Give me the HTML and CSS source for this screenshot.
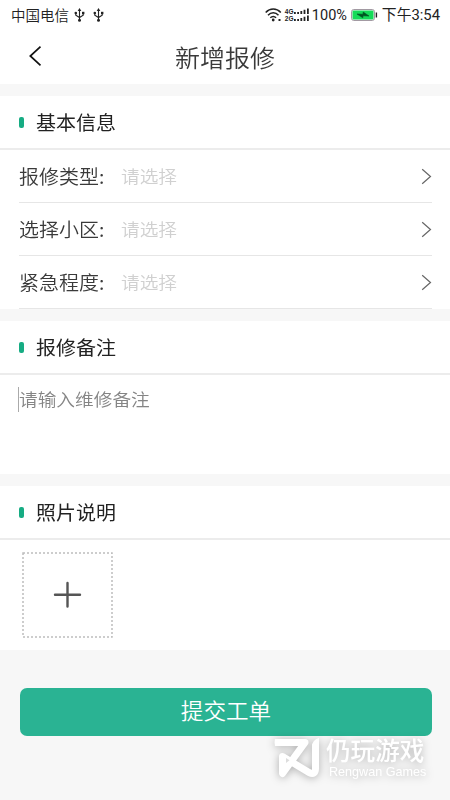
FILE: index.html
```html
<!DOCTYPE html>
<html lang="zh-CN">
<head>
<meta charset="utf-8">
<title>新增报修</title>
<link rel="stylesheet" href="styles.css">
</head>
<body>
<div class="status">
  <span class="carrier">中国电信</span>
  <svg class="usb" width="11" height="14" viewBox="0 0 11 14"><path d="M5.5 2v10M1.8 5v2.2l3.7 2.3 3.7-2.3V5" fill="none" stroke="#222" stroke-width="1.1"/><path d="M5.5 0l1.8 3H3.7z"/><circle cx="1.8" cy="5" r="1.3"/><path d="M8 3.8h2.4v2.4H8z"/><circle cx="5.5" cy="12.2" r="1.5"/></svg>
  <svg class="usb" width="11" height="14" viewBox="0 0 11 14"><path d="M5.5 2v10M1.8 5v2.2l3.7 2.3 3.7-2.3V5" fill="none" stroke="#222" stroke-width="1.1"/><path d="M5.5 0l1.8 3H3.7z"/><circle cx="1.8" cy="5" r="1.3"/><path d="M8 3.8h2.4v2.4H8z"/><circle cx="5.5" cy="12.2" r="1.5"/></svg>
  <svg class="wifi" width="17" height="14" viewBox="0 0 17 14"><g fill="none" stroke="#222" stroke-width="1.5"><path d="M.7 4.5C5-.1 11.5-.1 15.8 4.5M3 7.2c3-3.2 7.500-3.2 10.5 0M5.3 9.8c1.8-1.9 4-1.9 5.8 0"/></g><circle cx="8.2" cy="12" r="1.4"/><path d="M13.500 11h2v2h-2z"/></svg>
  <span class="nets"><b>4G</b><b>2G</b></span>
  <svg class="bars" width="16" height="14" viewBox="0 0 16 14"><path d="M0 4h1.8v2H0zM3.2 4H5v2H3.2zM6.4 3h1.8v3H6.4zM9.6 1.8h1.8V6H9.6zM13 .5h1.8V6H13zM0 11h1.8v2H0zM3.2 11H5v2H3.2zM6.4 10h1.8v3H6.4zM9.6 8.8h1.8V13H9.6zM13 7.5h1.8V13H13z"/></svg>
  <span class="percent">100%</span>
  <svg class="battery" width="27" height="12" viewBox="0 0 27 12"><rect x=".6" y=".6" width="22.8" height="10.8" rx="2" fill="#fff" stroke="#998f99"/><rect x="1.500" y="1.500" width="21" height="9" rx="1" fill="#14db58"/><path d="M6 5l6 .2.2-2.2 5.8 4-6-.2-.2 2z" fill="#052" stroke="#052" stroke-width=".6"/><path d="M24.7 3.5h1.4v5h-1.4z"/></svg>
  <span class="time">下午3:54</span>
</div>
<header class="nav">
  <svg class="back" width="14" height="22" viewBox="0 0 14 22"><path d="M12.5 1.7L2.3 11l10.2 9.3" fill="none" stroke="#111" stroke-width="1.7"/></svg>
  <h1>新增报修</h1>
</header>
<section class="card basic">
  <h2><span>基本信息</span></h2>
  <div class="row"><label>报修类型:</label><span>请选择</span><svg width="11" height="17" viewBox="0 0 11 17"><path d="M1.2 1.2l8.3 7.3-8.3 7.3" fill="none" stroke="#666" stroke-width="1.2"/></svg></div>
  <div class="row"><label>选择小区:</label><span>请选择</span><svg width="11" height="17" viewBox="0 0 11 17"><path d="M1.2 1.2l8.3 7.3-8.3 7.3" fill="none" stroke="#666" stroke-width="1.2"/></svg></div>
  <div class="row"><label>紧急程度:</label><span>请选择</span><svg width="11" height="17" viewBox="0 0 11 17"><path d="M1.2 1.2l8.3 7.3-8.3 7.3" fill="none" stroke="#666" stroke-width="1.2"/></svg></div>
</section>
<section class="card remark">
  <h2><span>报修备注</span></h2>
  <div class="note"><i class="caret"></i><span>请输入维修备注</span></div>
</section>
<section class="card photos">
  <h2><span>照片说明</span></h2>
  <div class="upload">
    <svg width="91" height="86" viewBox="0 0 91 86"><rect x="1" y="1" width="89" height="84" fill="none" stroke="#bdbdbd" stroke-width="1.5" stroke-dasharray="2 2"/><path d="M45.5 31v23.500M33 42.700h25" stroke="#555" stroke-width="2.400" stroke-linecap="round"/></svg>
  </div>
</section>
<button class="submit"><span>提交工单</span></button>
<div class="watermark">
  <svg width="48" height="42" viewBox="0 0 48 42"><g fill="none" stroke="#fff" stroke-width="7" stroke-linejoin="round" stroke-linecap="round"><path d="M8 6.500h23L8.500 37.500V20.500L35 36.500q6.500 3 6.500-4V10"/></g><path d="M1 3h8v7H1q-1-4 0-7zM38 11q0-7 7-9v10h-7z" fill="#fff"/><path d="M12 22l3.500 2.300L12 27z" fill="#ddd"/></svg>
  <div class="brand"><strong>仍玩游戏</strong><small>Rengwan Games</small></div>
</div>
</body>
</html>
```
FILE: styles.css
```css
* { box-sizing: border-box; }
body {
  margin: 0;
  width: 450px;
  height: 800px;
  overflow: hidden;
  position: relative;
  background: #f7f7f7;
  font-family: "Noto Sans CJK SC", sans-serif;
  font-weight: 350;
  color: #3a3a3a;
}
.status {
  display: flex;
  align-items: center;
  height: 30px;
  padding: 0 10px 0 11px;
  background: #fff;
  font-size: 14.5px;
  line-height: 28px;
  color: #222;
  white-space: nowrap;
}
.status svg { fill: #222; flex: none; }
.carrier { margin-top: -1px; }
.usb { margin-left: 5px; }
.usb + .usb { margin-left: 8px; }
.wifi { margin-left: auto; }
.nets {
  display: flex;
  flex-direction: column;
  width: 9px;
  margin-left: 3px;
}
.nets b { font: bold 6.5px/7px "Liberation Sans", sans-serif; }
.percent {
  width: 36px;
  margin: 1px 0 0 2px;
  font-family: Roboto, sans-serif;
  font-weight: 400;
}
.battery { margin-left: 3px; }
.time {
  margin-left: 4px;
  font-family: Roboto, "Noto Sans CJK SC", sans-serif;
  font-weight: 400;
  font-size: 14.8px;
}
.nav {
  display: grid;
  grid-template-columns: 29px 1fr 29px;
  align-items: center;
  height: 54px;
  background: #fff;
}
.back { margin: 0 0 2px 28px; }
.nav h1 {
  margin: 0;
  text-align: center;
  font-size: 25px;
  line-height: 54px;
  font-weight: 350;
  transform: scaleY(.94);
}
.card { background: #fff; margin-top: 12px; }
.card h2 {
  display: flex;
  align-items: center;
  height: 54px;
  margin: 0;
  padding-left: 19px;
  border-bottom: 2px solid #ececec;
  font-size: 20px;
  font-weight: 400;
  color: #222;
}
.card h2 span { padding-top: 1px; }
.card h2 span, .row label, .row span, .note span { transform: scaleY(.94); }
.card h2::before {
  content: "";
  width: 5px;
  height: 11px;
  margin-right: 12px;
  border-radius: 2px;
  background: #16ac83;
}
.row {
  display: flex;
  align-items: center;
  height: 53px;
  margin: 0 18px 0 19px;
  border-bottom: 1px solid #e6e6e6;
  font-size: 20px;
}
.row label { width: 102px; }
.row span { margin-top: -1px; font-size: 18.7px; color: #d0d0d0; }
.row svg { margin-left: auto; }
.remark { height: 153px; }
.note {
  display: flex;
  align-items: center;
  height: 48px;
  padding-left: 18px;
  font-size: 18.7px;
  color: #858585;
}
.note span { margin-top: -1px; }
.caret { width: 1px; height: 25px; background: #aaa; }
.photos { height: 164px; }
.upload { padding: 12px 0 0 22px; }
.upload svg { display: block; }
.submit {
  display: block;
  width: 412px;
  height: 48px;
  margin: 38px 0 0 20px;
  padding: 0 0 2px;
  border: 0;
  border-radius: 7px;
  background: #2ab393;
  color: #fff;
  font: 350 22.6px/46px "Noto Sans CJK SC", sans-serif;
}
.submit span { display: block; transform: translateY(-1px) scaleY(.95); }
.watermark {
  position: absolute;
  left: 274px;
  top: 736px;
  display: flex;
  color: #fff;
  filter: drop-shadow(0 1px 4px rgba(0, 0, 0, .3));
}
.brand { display: flex; flex-direction: column; margin-left: 4px; }
.brand strong { font-size: 24.6px; font-weight: 500; line-height: 27px; }
.brand small { margin: 2px 0 0 3px; font: 12.6px/14px "Liberation Sans", sans-serif; }
```
